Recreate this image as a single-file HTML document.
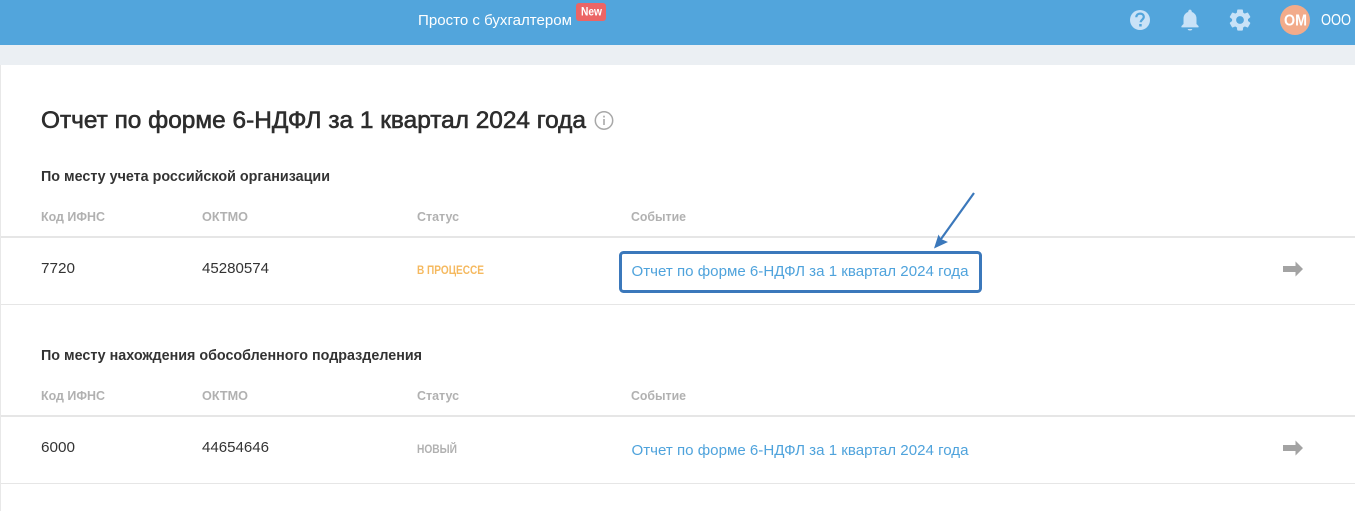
<!DOCTYPE html>
<html lang="ru">
<head>
<meta charset="utf-8">
<title>Отчет по форме 6-НДФЛ</title>
<style>
html,body{margin:0;padding:0;background:#fff;width:1355px;height:511px;overflow:hidden}
svg{display:block}
text{font-family:"Liberation Sans","DejaVu Sans",sans-serif}
.h{font-size:13px;font-weight:700;fill:#b1b1b1}
.v{font-size:15px;fill:#333}
.l{font-size:15px;fill:#4fa3dc}
.s{font-size:15px;font-weight:700;fill:#333}
</style>
</head>
<body>
<svg width="1355" height="511" viewBox="0 0 1355 511" xmlns="http://www.w3.org/2000/svg">
<rect width="1355" height="511" fill="#fff"/>
<rect x="0" y="45" width="1355" height="20" fill="#ebeff3"/>
<rect x="0" y="65" width="1" height="446" fill="#e8e8e8"/>
<rect width="1355" height="45" fill="#52a5dc"/>

<text x="418" y="25" font-size="15" fill="#fff" textLength="154" lengthAdjust="spacingAndGlyphs">Просто с бухгалтером</text>
<rect x="576" y="3" width="30" height="18" rx="3" fill="#ec6565"/>
<text x="581" y="15.500" font-size="12" font-weight="700" fill="#fff" textLength="21" lengthAdjust="spacingAndGlyphs">New</text>

<!-- help -->
<circle cx="1140" cy="20" r="10" fill="#c9e2f7"/>
<path d="M1136.300 17.300c0-2.300 1.600-3.700 3.800-3.700 2.100 0 3.700 1.300 3.700 3.300 0 2.700-3.100 2.800-3.100 5.400" fill="none" stroke="#52a5dc" stroke-width="2.200"/>
<rect x="1139.200" y="24" width="2.500" height="2.500" fill="#52a5dc"/>
<!-- bell -->
<path transform="translate(1177.400 7.200) scale(1.05)" fill="#c9e2f7" stroke="#c9e2f7" stroke-width=".4" d="M12 22c1.100 0 2-.4 2-1h-4c0 .6.890 1 2 1zm6-6v-5c0-3.070-1.640-5.640-4.500-6.320V4c0-.830-.670-1.500-1.500-1.500s-1.500.670-1.500 1.500v.680C7.630 5.360 6 7.920 6 11v5l-2 2v1h16v-1l-2-2z"/>
<!-- gear -->
<path transform="translate(1227.200 7.200) scale(1.07)" fill="#c9e2f7" stroke="#c9e2f7" stroke-width=".5" d="M19.140 12.940c.04-.3.060-.610.060-.940 0-.320-.020-.640-.070-.940l2.030-1.580c.180-.140.230-.410.120-.610l-1.920-3.320c-.120-.220-.370-.290-.590-.220l-2.390.960c-.5-.380-1.030-.7-1.620-.940l-.360-2.540c-.040-.240-.240-.410-.480-.410h-3.840c-.240 0-.430.170-.470.410l-.360 2.540c-.590.240-1.130.570-1.620.940l-2.390-.960c-.220-.080-.470 0-.590.220L2.740 8.870c-.120.210-.080.470.120.610l2.030 1.580c-.050.3-.090.630-.090.940s.020.640.070.940l-2.030 1.580c-.180.140-.230.410-.120.610l1.920 3.320c.120.220.370.290.590.220l2.390-.960c.5.380 1.030.7 1.620.940l.360 2.540c.050.240.240.410.480.410h3.840c.240 0 .440-.170.470-.410l.360-2.540c.590-.240 1.130-.560 1.620-.940l2.390.960c.220.080.470 0 .590-.220l1.920-3.320c.120-.220.070-.470-.120-.610l-2.010-1.580z"/>
<circle cx="1240" cy="20" r="3.900" fill="#52a5dc"/>
<!-- avatar -->
<circle cx="1295" cy="20" r="15" fill="#f2ab8a"/>
<text x="1284" y="25.500" font-size="15.500" font-weight="700" fill="#fff" textLength="23" lengthAdjust="spacingAndGlyphs">ОМ</text>
<text x="1321" y="25" font-size="15.500" fill="#fff" textLength="30" lengthAdjust="spacingAndGlyphs">ООО</text>

<text x="41" y="128" font-size="23.600" fill="#2d2d2d" stroke="#2d2d2d" stroke-width=".6" textLength="545" lengthAdjust="spacingAndGlyphs">Отчет по форме 6-НДФЛ за 1 квартал 2024 года</text>
<circle cx="604" cy="120.500" r="8.700" fill="none" stroke="#a8a8a8" stroke-width="1.500"/>
<rect x="603.200" y="119" width="1.600" height="6" fill="#a8a8a8"/>
<rect x="603.200" y="115.700" width="1.600" height="1.800" fill="#a8a8a8"/>

<!-- section 1 -->
<text class="s" x="41" y="181" textLength="289" lengthAdjust="spacingAndGlyphs">По месту учета российской организации</text>
<text class="h" x="41" y="221" textLength="64" lengthAdjust="spacingAndGlyphs">Код ИФНС</text>
<text class="h" x="202" y="221" textLength="46" lengthAdjust="spacingAndGlyphs">ОКТМО</text>
<text class="h" x="417" y="221" textLength="42" lengthAdjust="spacingAndGlyphs">Статус</text>
<text class="h" x="631" y="221" textLength="55" lengthAdjust="spacingAndGlyphs">Событие</text>
<rect x="1" y="236" width="1354" height="2" fill="#e6e6e6"/>
<text class="v" x="41" y="273" textLength="34" lengthAdjust="spacingAndGlyphs">7720</text>
<text class="v" x="202" y="273" textLength="67" lengthAdjust="spacingAndGlyphs">45280574</text>
<text x="417" y="274" font-size="11.500" font-weight="700" fill="#f5b95f" textLength="67" lengthAdjust="spacingAndGlyphs">В ПРОЦЕССЕ</text>
<text class="l" x="631.500" y="276" textLength="337" lengthAdjust="spacingAndGlyphs">Отчет по форме 6-НДФЛ за 1 квартал 2024 года</text>
<path d="M1283 266h12.500v-4.500l7.500 7.500-7.500 7.500v-4.500h-12.500z" fill="#a3a3a3"/>
<rect x="1" y="304" width="1354" height="1" fill="#e6e6e6"/>

<rect x="620.500" y="252.500" width="360" height="39" rx="3" fill="none" stroke="#3b78bb" stroke-width="3"/>
<path d="M974 193L941 239" stroke="#3b78bb" stroke-width="2.200" fill="none"/>
<path d="M934 248.500l4.500-14 2.500 4.500 7 3z" fill="#3b78bb"/>

<!-- section 2 -->
<text class="s" x="41" y="360" textLength="381" lengthAdjust="spacingAndGlyphs">По месту нахождения обособленного подразделения</text>
<text class="h" x="41" y="400" textLength="64" lengthAdjust="spacingAndGlyphs">Код ИФНС</text>
<text class="h" x="202" y="400" textLength="46" lengthAdjust="spacingAndGlyphs">ОКТМО</text>
<text class="h" x="417" y="400" textLength="42" lengthAdjust="spacingAndGlyphs">Статус</text>
<text class="h" x="631" y="400" textLength="55" lengthAdjust="spacingAndGlyphs">Событие</text>
<rect x="1" y="415" width="1354" height="2" fill="#e6e6e6"/>
<text class="v" x="41" y="452" textLength="34" lengthAdjust="spacingAndGlyphs">6000</text>
<text class="v" x="202" y="452" textLength="67" lengthAdjust="spacingAndGlyphs">44654646</text>
<text x="417" y="453" font-size="11.500" font-weight="700" fill="#b1b1b1" textLength="40" lengthAdjust="spacingAndGlyphs">НОВЫЙ</text>
<text class="l" x="631.500" y="455" textLength="337" lengthAdjust="spacingAndGlyphs">Отчет по форме 6-НДФЛ за 1 квартал 2024 года</text>
<path d="M1283 445h12.500v-4.500l7.500 7.500-7.500 7.500v-4.500h-12.500z" fill="#a3a3a3"/>
<rect x="1" y="483" width="1354" height="1" fill="#e6e6e6"/>
</svg>
</body>
</html>
